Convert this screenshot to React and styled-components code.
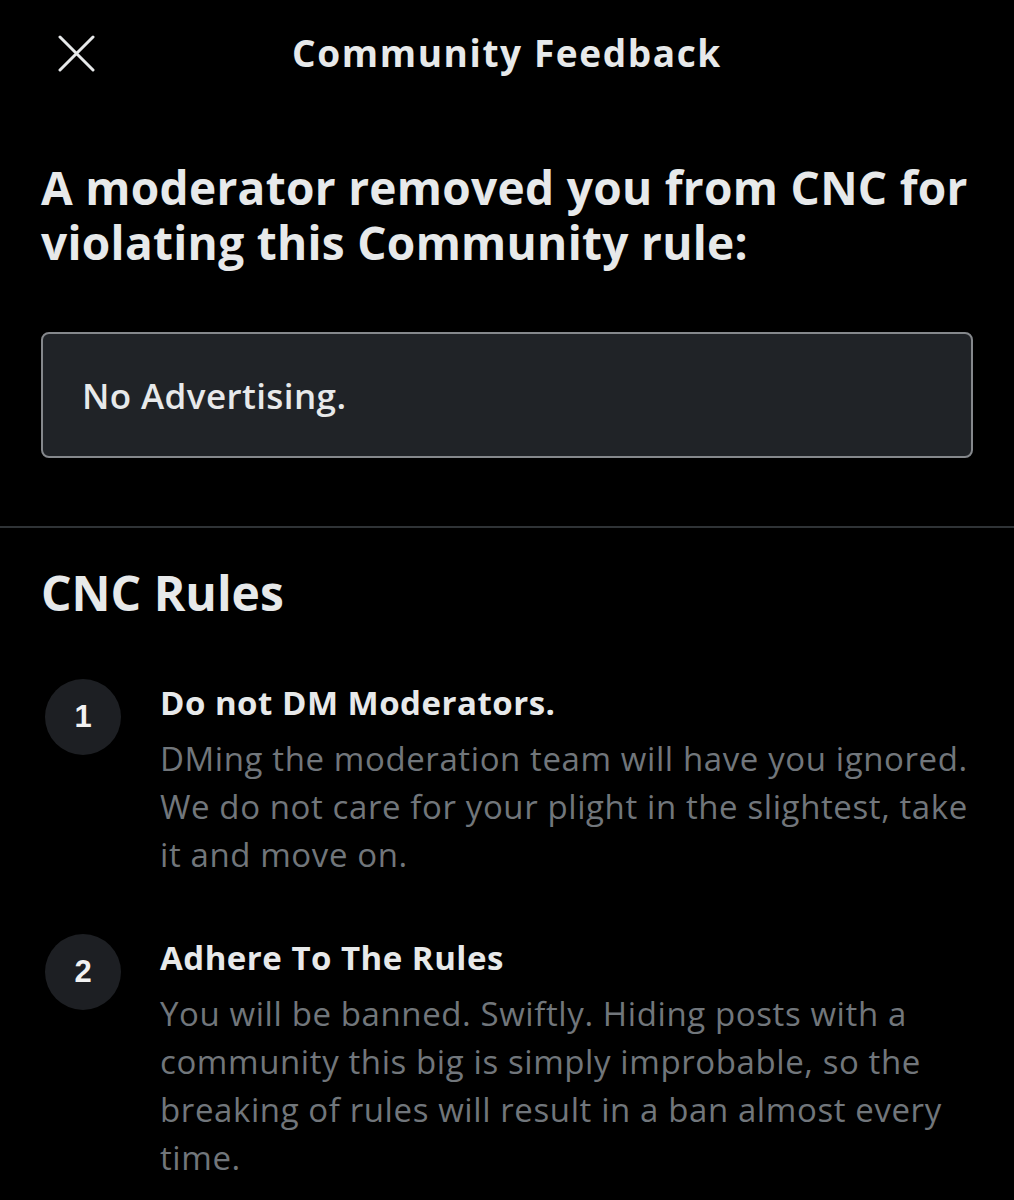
import styled, { createGlobalStyle } from 'styled-components'

const GlobalStyle = createGlobalStyle`
  html, body {
    margin: 0;
    padding: 0;
    background: #000;
  }
  body {
    font-family: "Open Sans", "Liberation Sans", sans-serif;
    color: #e7e9ea;
  }
`;

const Page = styled.div`
  width: 1014px;
  height: 1200px;
  background: #000;
  overflow: hidden;
`;

const Header = styled.div`
  display: grid;
  grid-template-columns: 120px 1fr 120px;
  align-items: center;
  height: 106px;
`;

const CloseButton = styled.button`
  display: flex;
  align-items: center;
  justify-content: center;
  width: 60px;
  height: 60px;
  margin-left: 46px;
  padding: 0;
  border: none;
  background: transparent;
  color: #e7e9ea;
`;

const HeaderTitle = styled.h1`
  margin: 0;
  text-align: center;
  font-size: 37px;
  line-height: 48px;
  font-weight: 700;
  letter-spacing: 1.6px;
`;

const Section = styled.div`
  padding: 54px 38px 68px 41px;
`;

const Headline = styled.h2`
  margin: 0 0 62px;
  font-size: 46px;
  line-height: 55px;
  font-weight: 700;
  letter-spacing: 0.3px;
`;

const RuleBox = styled.div`
  display: flex;
  align-items: center;
  height: 126px;
  margin-right: 3px;
  padding: 0 39px;
  box-sizing: border-box;
  background: #202327;
  border: 2px solid #85888c;
  border-radius: 8px;
  font-size: 35px;
  font-weight: 600;
  letter-spacing: 0.4px;
`;

const Divider = styled.hr`
  margin: 0;
  border: none;
  height: 2px;
  background: #2f3336;
`;

const RulesSection = styled.div`
  padding: 37px 41px 0;
`;

const RulesTitle = styled.h2`
  margin: 0 0 58px;
  font-size: 48px;
  line-height: 56px;
  font-weight: 700;
`;

const RuleList = styled.ol`
  display: flex;
  flex-direction: column;
  gap: 55px;
  margin: 0;
  padding: 0;
  list-style: none;
`;

const RuleItem = styled.li`
  display: grid;
  grid-template-columns: 119px 1fr;
  align-items: start;
`;

const Badge = styled.div`
  display: flex;
  align-items: center;
  justify-content: center;
  width: 76px;
  height: 76px;
  margin-left: 4px;
  border-radius: 50%;
  background: #1d1f23;
  font-family: "Liberation Sans", Arial, sans-serif;
  font-size: 31px;
  font-weight: 700;
  color: #f2f2f2;
`;

const RuleBody = styled.div`
  display: flex;
  flex-direction: column;
  gap: 8px;
`;

const RuleName = styled.div`
  font-size: 33px;
  line-height: 48px;
  font-weight: 700;
  letter-spacing: 0.5px;
  color: #e7e9ea;
`;

const RuleText = styled.div`
  font-size: 33px;
  line-height: 48px;
  font-weight: 400;
  letter-spacing: 0.6px;
  color: #71767b;
`;

const rules = [
  {
    name: 'Do not DM Moderators.',
    text: 'DMing the moderation team will have you ignored. We do not care for your plight in the slightest, take it and move on.',
  },
  {
    name: 'Adhere To The Rules',
    text: 'You will be banned. Swiftly. Hiding posts with a community this big is simply improbable, so the breaking of rules will result in a ban almost every time.',
  },
];

const CloseIcon = () => (
  <svg width="37" height="37" viewBox="0 0 37 37" fill="none">
    <path d="M2 2L35 35M35 2L2 35" stroke="currentColor" strokeWidth="3" strokeLinecap="round" />
  </svg>
);

const App = () => {
  return (
    <Page>
      <GlobalStyle />
      <Header>
        <CloseButton aria-label="Close">
          <CloseIcon />
        </CloseButton>
        <HeaderTitle>Community Feedback</HeaderTitle>
        <div />
      </Header>
      <Section>
        <Headline>A moderator removed you from CNC for violating this Community rule:</Headline>
        <RuleBox>No Advertising.</RuleBox>
      </Section>
      <Divider />
      <RulesSection>
        <RulesTitle>CNC Rules</RulesTitle>
        <RuleList>
          {rules.map((rule, i) => (
            <RuleItem key={rule.name}>
              <Badge>{i + 1}</Badge>
              <RuleBody>
                <RuleName>{rule.name}</RuleName>
                <RuleText>{rule.text}</RuleText>
              </RuleBody>
            </RuleItem>
          ))}
        </RuleList>
      </RulesSection>
    </Page>
  )
}

export default App
